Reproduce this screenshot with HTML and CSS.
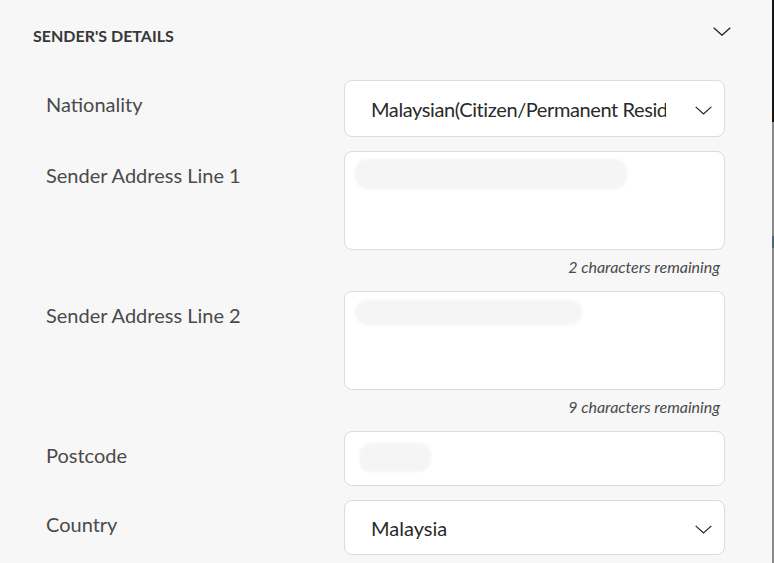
FILE: index.html
```html
<!DOCTYPE html>
<html lang="en">
<head>
<meta charset="utf-8">
<title>Sender's Details</title>
<link rel="stylesheet" href="styles.css">
</head>
<body>
<div class="page">
  <section class="panel">
    <header class="panel-head">
      <h2 class="panel-title">SENDER'S DETAILS</h2>
      <svg class="chev chev-head" viewBox="0 0 18 9" width="18" height="9"><path d="M0.7 0.7 L9 8.2 L17.3 0.7" fill="none" stroke="#222" stroke-width="1.3"/></svg>
    </header>
    <div class="form">
      <div class="row">
        <label class="label">Nationality</label>
        <div class="field">
          <div class="control select tall">
            <span class="select-text tight">Malaysian(Citizen/Permanent Resident)</span>
            <svg class="chev chev-sel" viewBox="0 0 18 9" width="17" height="9"><path d="M0.7 0.7 L9 8.2 L17.3 0.7" fill="none" stroke="#222" stroke-width="1.3"/></svg>
          </div>
        </div>
      </div>
      <div class="row">
        <label class="label">Sender Address Line 1</label>
        <div class="field">
          <div class="control area">
            <span class="blur blur-a1"></span>
          </div>
          <div class="counter">2 characters remaining</div>
        </div>
      </div>
      <div class="row">
        <label class="label">Sender Address Line 2</label>
        <div class="field">
          <div class="control area">
            <span class="blur blur-a2"></span>
          </div>
          <div class="counter">9 characters remaining</div>
        </div>
      </div>
      <div class="row">
        <label class="label">Postcode</label>
        <div class="field">
          <div class="control input">
            <span class="blur blur-pc"></span>
          </div>
        </div>
      </div>
      <div class="row">
        <label class="label">Country</label>
        <div class="field">
          <div class="control select">
            <span class="select-text">Malaysia</span>
            <svg class="chev chev-sel" viewBox="0 0 18 9" width="17" height="9"><path d="M0.7 0.7 L9 8.2 L17.3 0.7" fill="none" stroke="#222" stroke-width="1.3"/></svg>
          </div>
        </div>
      </div>
    </div>
  </section>
  <div class="edge"></div>
</div>
</body>
</html>
```

FILE: styles.css
```css
html, body {
  margin: 0;
  padding: 0;
}
body {
  background: #f7f7f7;
  font-family: Lato, "Open Sans", sans-serif;
  color: #3c3c3c;
  width: 774px;
  height: 563px;
  overflow: hidden;
}
.page {
  display: flex;
  height: 563px;
}
.panel {
  width: 772px;
  background: #f7f7f7;
}
.edge {
  width: 2px;
  background: linear-gradient(to bottom, #1a1410 0, #1a1410 122px, #8a8a8a 122px, #8a8a8a 236px, #4a6a72 236px, #4a6a72 248px, #8a8a8a 248px);
}
.panel-head {
  display: flex;
  align-items: flex-start;
  justify-content: space-between;
  padding: 27px 41px 0 33px;
  height: 20px;
}
.panel-title {
  margin: -1px 0 0;
  font-size: 16px;
  line-height: 20px;
  font-weight: 700;
  color: #383838;
}
.chev-head {
  display: block;
}
.form {
  margin-top: 33px;
  display: flex;
  flex-direction: column;
  gap: 14px;
}
.row {
  display: grid;
  grid-template-columns: 298px 381px;
  padding-left: 46px;
}
.label {
  padding-top: 11px;
  font-size: 20px;
  line-height: 26px;
  color: #4a4a4a;
}
.field {
  display: flex;
  flex-direction: column;
}
.control {
  box-sizing: border-box;
  background: #fff;
  border: 1px solid #dcdcdc;
  border-radius: 8px;
}
.select {
  height: 55px;
  display: flex;
  align-items: center;
  padding: 0 12px 0 26px;
}
.select.tall {
  height: 57px;
}
.select-text {
  flex: 1;
  min-width: 0;
  white-space: nowrap;
  overflow: hidden;
  font-size: 20px;
  color: #2a2a2a;
  margin-right: 29px;
  line-height: 26px;
}
.select-text.tight {
  letter-spacing: -0.4px;
}
.chev-sel {
  display: block;
  flex: none;
  margin-top: 3px;
}
.area {
  height: 99px;
  padding: 7px 10px;
}
.input {
  height: 55px;
  padding: 11px 14px;
}
.blur {
  display: block;
  background: #f5f5f5;
  border-radius: 12px;
  filter: blur(1px);
}
.blur-a1 {
  width: 272px;
  height: 30px;
}
.blur-a2 {
  width: 227px;
  height: 25px;
  margin-top: 1px;
}
.blur-pc {
  width: 72px;
  height: 29px;
}
.counter {
  margin-top: 7px;
  text-align: right;
  padding-right: 5px;
  font-size: 16px;
  line-height: 20px;
  font-style: italic;
  color: #4a4a4a;
}
```
